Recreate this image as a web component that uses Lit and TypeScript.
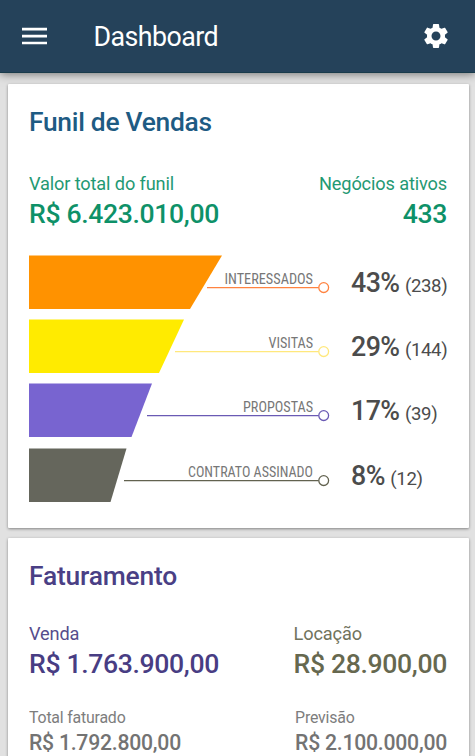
import { LitElement, html, css, svg } from "lit";
import { customElement, property } from "lit/decorators.js";

interface Stage {
  label: string;
  labelWidth: number;
  percent: string;
  count: number;
  top: number;
  bottom: number;
  lineStart: number;
  fill: string;
  stroke: string;
}

const stages: Stage[] = [
  { label: "INTERESSADOS", labelWidth: 88.5, percent: "43%", count: 238, top: 193, bottom: 161, lineStart: 178, fill: "#ff9200", stroke: "#ff8340" },
  { label: "VISITAS", labelWidth: 44.5, percent: "29%", count: 144, top: 155, bottom: 130, lineStart: 146, fill: "#ffeb00", stroke: "#ffe87c" },
  { label: "PROPOSTAS", labelWidth: 70, percent: "17%", count: 39, top: 123, bottom: 102.5, lineStart: 118, fill: "#7864d0", stroke: "#6a5ab4" },
  { label: "CONTRATO ASSINADO", labelWidth: 125, percent: "8%", count: 12, top: 97.5, bottom: 81.5, lineStart: 95, fill: "#65665c", stroke: "#62624f" },
];

@customElement("sales-funnel")
export class SalesFunnel extends LitElement {
  static styles = css`
    :host { display: flex; flex-direction: column; gap: 10.3px; }
    .stage { display: flex; height: 54px; }
    .shape { width: 322px; height: 54px; flex: none; overflow: visible; }
    .label { font-family: "Roboto Condensed", Roboto, sans-serif; font-size: 15.3px; fill: #777; font-stretch: 75%; }
    .figures { display: flex; align-items: baseline; gap: 5.5px; line-height: 55px; color: #4c4c4c; white-space: nowrap; }
    .percent { font-size: 26.8px; font-weight: 500; letter-spacing: -0.6px; }
    .count { font-size: 18.6px; letter-spacing: -0.35px; }
  `;

  render() {
    return stages.map((s) => html`
      <div class="stage">
        <svg class="shape" viewBox="0 0 322 54">
          ${svg`
            <polygon points="0,-0.4 ${s.top},-0.4 ${s.bottom},53 0,53" fill=${s.fill}></polygon>
            <path d="M${s.lineStart} 31.6H289.8" stroke=${s.stroke} stroke-width="1.2" fill="none"></path>
            <circle cx="294.7" cy="31.6" r="4.9" stroke=${s.stroke} stroke-width="1.3" fill="#fff"></circle>
            <text class="label" x=${284 - s.labelWidth} y="28.2" textLength=${s.labelWidth} lengthAdjust="spacingAndGlyphs">${s.label}</text>
          `}
        </svg>
        <div class="figures"><span class="percent">${s.percent}</span><span class="count">(${s.count})</span></div>
      </div>`);
  }
}

@customElement("metric-value")
export class MetricValue extends LitElement {
  @property() label = "";
  @property() value = "";

  static styles = css`
    :host { display: block; white-space: nowrap; }
    .label { font-size: 18.2px; line-height: 25px; letter-spacing: -0.14px; font-weight: 400; opacity: 0.92; }
    .value { font-size: 26.6px; line-height: 36px; font-weight: 500; letter-spacing: -0.35px; }
    :host([small]) .label { font-size: 15.9px; line-height: 22px; letter-spacing: -0.2px; }
    :host([small]) .value { font-size: 21.2px; line-height: 28px; letter-spacing: -0.24px; }
  `;

  render() {
    return html`<div class="label">${this.label}</div><div class="value">${this.value}</div>`;
  }
}

@customElement("app-root")
export class AppRoot extends LitElement {
  static styles = css`
    :host { display: flex; flex-direction: column; height: 756px; overflow: hidden; box-sizing: border-box; background: #e1e1e1; font-family: Roboto, sans-serif; }
    .bar { position: relative; display: flex; align-items: center; flex: none; height: 73px; padding: 0 27px 2px 22px; box-sizing: border-box; background: #25425a; color: #fff; box-shadow: inset 0 -1px #193b4b, 0 1px 9px rgba(0, 0, 0, 0.5); }
    .menu { width: 25px; height: 18px; }
    .name { margin: 2px 0 0 46.5px; flex: 1; font-size: 26.8px; line-height: 36px; font-weight: 400; letter-spacing: -0.55px; }
    .gear { width: 30px; height: 30px; margin-right: -3px; }
    .cards { display: flex; flex-direction: column; gap: 10px; padding: 11px 6.5px 0 7.5px; }
    .card { flex: none; box-sizing: border-box; background: #fff; border-radius: 1px; padding: 19.5px 21.5px 0; box-shadow: 0 1px 3px rgba(0, 0, 0, 0.42); }
    .funnel-card { height: 444px; }
    .billing-card { height: 260px; }
    .title { margin: 0; font-size: 26.4px; line-height: 36px; font-weight: 500; color: #1e5b83; letter-spacing: -0.3px; }
    .billing { color: #4a3f85; letter-spacing: -0.2px; }
    .row { display: flex; justify-content: space-between; }
    .totals { margin-top: 31px; color: #0e9168; }
    .right { text-align: right; }
    .chart { margin-top: 24.4px; }
    .revenue { margin-top: 27.5px; }
    .sale { color: #483d83; }
    .rent { color: #66684f; }
    .forecast { margin-top: 25px; color: #737373; }
  `;

  render() {
    return html`
      <header class="bar">
        <svg class="menu" viewBox="0 0 25 18"><path d="M0 2.2H25M0 9.1H25M0 16H25" stroke="#fff" stroke-width="2.7"></path></svg>
        <h1 class="name">Dashboard</h1>
        <svg class="gear" viewBox="0 0 24 24"><path fill="#fff" d="M19.14 12.94c.04-.3.06-.61.06-.94 0-.32-.02-.64-.07-.94l2.03-1.58c.18-.14.23-.41.12-.61l-1.92-3.32c-.12-.22-.37-.29-.59-.22l-2.39.96c-.5-.38-1.03-.7-1.62-.94l-.36-2.54c-.04-.24-.24-.41-.48-.41h-3.84c-.24 0-.43.17-.47.41l-.36 2.54c-.59.24-1.13.57-1.62.94l-2.39-.96c-.22-.08-.47 0-.59.22L2.74 8.87c-.12.21-.08.47.12.61l2.03 1.58c-.05.3-.09.63-.09.94s.02.64.07.94l-2.03 1.58c-.18.14-.23.41-.12.61l1.92 3.32c.12.22.37.29.59.22l2.39-.96c.5.38 1.03.7 1.62.94l.36 2.54c.05.24.24.41.48.41h3.84c.24 0 .44-.17.47-.41l.36-2.54c.59-.24 1.13-.56 1.62-.94l2.39.96c.22.08.47 0 .59-.22l1.92-3.32c.12-.22.07-.47-.12-.61l-2.01-1.58zM12 15.6c-1.98 0-3.6-1.62-3.6-3.6s1.62-3.6 3.6-3.6 3.6 1.62 3.6 3.6-1.62 3.6-3.6 3.6z"></path></svg>
      </header>
      <main class="cards">
        <section class="card funnel-card">
          <h2 class="title">Funil de Vendas</h2>
          <div class="row totals">
            <metric-value label="Valor total do funil" value="R$ 6.423.010,00"></metric-value>
            <metric-value class="right" label="Negócios ativos" value="433"></metric-value>
          </div>
          <sales-funnel class="chart"></sales-funnel>
        </section>
        <section class="card billing-card">
          <h2 class="title billing">Faturamento</h2>
          <div class="row revenue">
            <metric-value class="sale" label="Venda" value="R$ 1.763.900,00"></metric-value>
            <metric-value class="rent" label="Locação" value="R$ 28.900,00"></metric-value>
          </div>
          <div class="row forecast">
            <metric-value small label="Total faturado" value="R$ 1.792.800,00"></metric-value>
            <metric-value small label="Previsão" value="R$ 2.100.000,00"></metric-value>
          </div>
        </section>
      </main>`;
  }
}
